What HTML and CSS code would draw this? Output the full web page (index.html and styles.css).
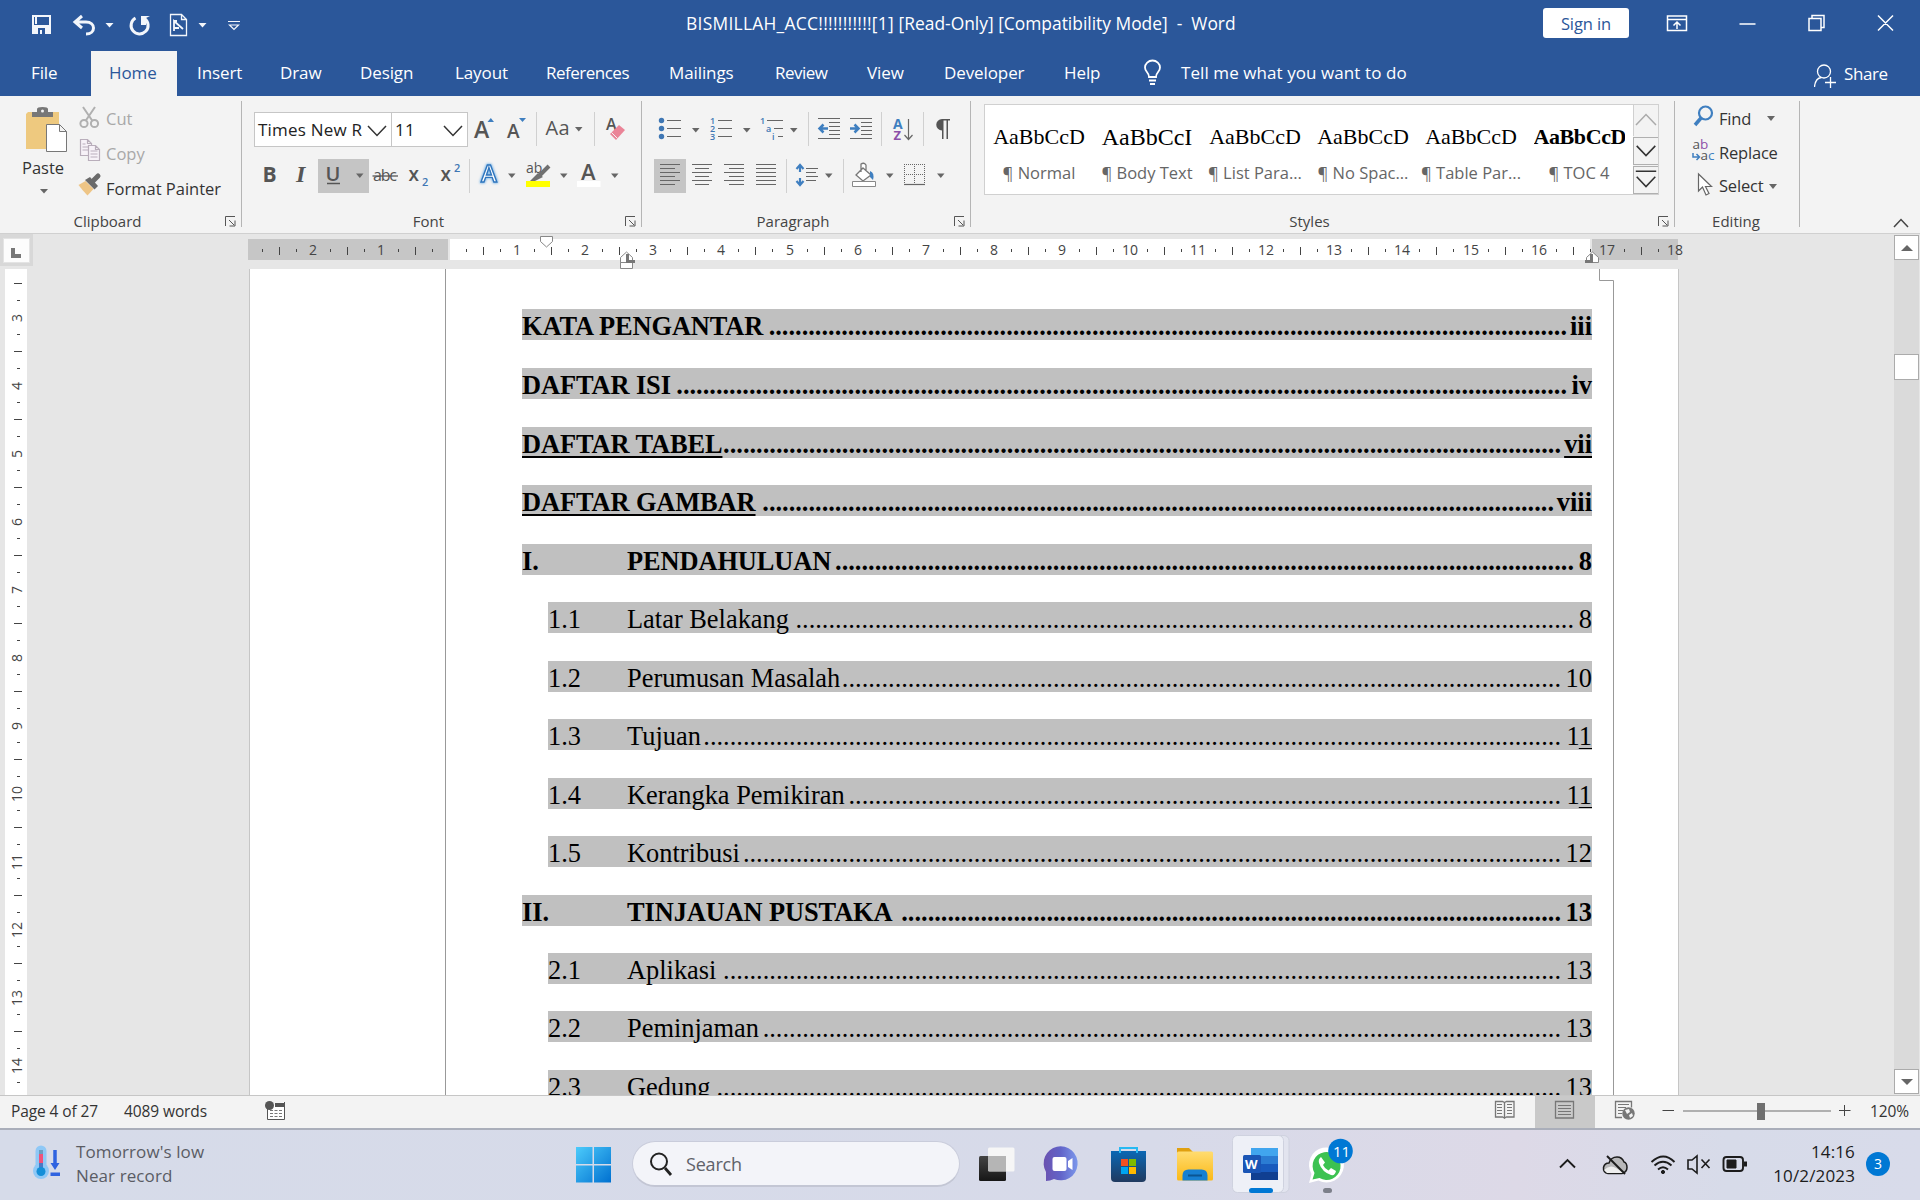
FILE: index.html
```html
<!DOCTYPE html>
<html lang="en">
<head>
<meta charset="utf-8">
<title>BISMILLAH_ACC - Word</title>
<link rel="stylesheet" href="styles.css">
</head>
<body>
<div class="app">

<header class="titlebar">
  <svg class="quick" viewBox="0 0 560 51" fill="none" stroke="#f3f6fb">
    <path d="M33 16h17v17h-17z M36 16v8M47 16" stroke-width="2"/><path d="M34 25h15v8h-15z" fill="#f3f6fb" stroke="none"/><path d="M38 28h7v6h-7z" fill="#2b579a" stroke="none"/><path d="M40 30h2v4h-2z" fill="#f3f6fb" stroke="none"/>
    <path d="M76 22h10c10 0 10 12 0 12M82 16l-7 6 7 6" stroke-width="3"/>
    <path d="M105.500 23h8l-4 4.500z M198.500 23h8l-4 4.500z" fill="#f3f6fb" stroke="none"/>
    <path d="M135.500 18a8.500 8.500 0 1 0 9 .5" stroke-width="3"/><path d="M141 16h9l-4 2v7h-5z" fill="#f3f6fb" stroke="none"/>
    <path d="M170.500 14.500h11l5 5v16h-16z M181.500 14.500v5h5" stroke-width="1.300"/><path d="M174 31v-10l9 8M174 28h5M174 21l3 0" stroke-width="1.800"/>
    <path d="M228 21.500h12M229.500 25l4.500 4.500 4.500-4.500z" stroke-width="1.200"/>
  </svg>
  <div class="doc-title"><span class="name">BISMILLAH_ACC!!!!!!!!!!![1]</span> [Read-Only] [Compatibility Mode]&nbsp; -&nbsp; Word</div>
  <button class="signin">Sign in</button>
  <svg class="winctl" viewBox="1640 0 280 51" fill="none" stroke="#fff" stroke-width="1.500">
    <path d="M1667.500 16h19v14.500h-19z M1667 19.500h20M1677 29v-7M1673.500 25.500l3.500-3.500 3.500 3.500"/>
    <path d="M1739.500 24h16M1809 18.500h12v12h-12z M1812 18.500v-3h12v12h-3M1878 15.500l15 15M1893 15.500l-15 15"/>
  </svg>
</header>

<nav class="tabs">
  <span>File</span><span class="active">Home</span><span>Insert</span><span>Draw</span><span>Design</span><span>Layout</span><span class="tight">References</span><span>Mailings</span><span class="tight">Review</span><span>View</span><span>Developer</span><span>Help</span>
  <svg class="bulb" viewBox="1144 51 37 45" fill="none" stroke="#fff" stroke-width="1.800"><path d="M1149 77c0-5-4-5-4-9.500a7.500 7 0 0 1 15 0c0 4.500-4 4.500-4 9.500z M1149 80.500h7M1150 84h5"/></svg>
  <span class="tell">Tell me what you want to do</span>
  <svg class="share-icon" viewBox="1814 51 30 45" fill="none" stroke="#fff" stroke-width="1.300"><circle cx="1824" cy="71.500" r="6.500"/><path d="M1814.500 87c.5-6 3-9 7-9.500M1825 82.500h11M1830.500 77v11"/></svg>
  <span class="share">Share</span>
</nav>

<section class="ribbon">
  <div class="group clipboard">
    <div class="clip-body">
      <div class="paste">
        <svg viewBox="22 101 56 56"><path d="M28 112h31a2 2 0 0 1 0 0v37H26v-35z" fill="#eec97f"/><path d="M32 117v-5h5v-3q0-2 5.500-2t5.500 2v3h5v5z" fill="#777"/><circle cx="42.500" cy="111" r="1.500" fill="#f3f3f3"/><path d="M46.500 124.500h13l7 7v20h-20z M59.500 124.500v7h7" fill="#fff" stroke="#777"/></svg>
        <span>Paste</span>
        <svg class="paste-caret" viewBox="0 0 8 5"><path d="M0 0h8l-4 4.500z" fill="#666"/></svg>
      </div>
      <div class="clip-list">
        <div class="off"><svg viewBox="78 101 24 32" fill="none" stroke="#b0b0b0" stroke-width="2"><path d="M83 107l9.500 14M95 107l-9.500 14"/><circle cx="84" cy="123.500" r="3.600"/><circle cx="94.500" cy="123.500" r="3.600"/></svg><span>Cut</span></div>
        <div class="off"><svg viewBox="78 138 24 32" fill="#f7f2f8" stroke="#b9aebb" stroke-width="1.200"><path d="M80.500 141.500h7l4 4v12h-11z M87.500 141.500v4h4M82.500 146h3M82.500 149h6M82.500 152h6"/><path d="M88.500 147.500h7l4 4v11h-11z M95.500 147.500v4h4M90.500 153h7M90.500 156h7M90.500 159h7"/></svg><span>Copy</span></div>
        <div><svg viewBox="78 173 24 32"><path d="M78.500 187l7-4 8 8-6 6.500q-5-5-9-10.500z" fill="#eec586"/><path d="M85 182l5-3 8 9-3.500 3.500z" fill="#6a6a6a"/><path d="M92 184l6-6" stroke="#6a6a6a" stroke-width="5" stroke-linecap="round"/></svg><span>Format Painter</span></div>
      </div>
    </div>
    <div class="glabel"><span>Clipboard</span><svg class="launch" viewBox="0 0 11 11"><path d="M.5 10V.5H10M4 4l5 5M10 4.500V10H4.500" fill="none" stroke="#555"/></svg></div>
  </div>

  <div class="group font">
    <div class="frow1">
      <div class="combo"><span>Times New R</span><svg viewBox="0 0 20 12"><path d="M1 1l9 9.500L19 1" fill="none" stroke="#333" stroke-width="1.500"/></svg></div>
      <div class="combo size"><span>11</span><svg viewBox="0 0 20 12"><path d="M1 1l9 9.500L19 1" fill="none" stroke="#333" stroke-width="1.500"/></svg></div>
      <svg viewBox="468 112 33 34"><text class="ic b6" x="474" y="138" font-size="23">A</text><path d="M487.500 122h6.500l-3.200-4z" fill="#3f7fc0"/></svg>
      <svg viewBox="501 112 35 34"><text class="ic b6" x="507" y="138" font-size="19">A</text><path d="M519 118h7l-3.500 4z" fill="#3f7fc0"/></svg>
      <svg class="sepl" viewBox="537 112 57 34"><text class="ic" x="545.500" y="135" font-size="20" textLength="24">Aa</text><path class="car" d="M575 127h7.500l-3.700 4.500z"/></svg>
      <svg class="sepl" viewBox="595 112 46 34"><text class="ic b6" x="606" y="130" font-size="16">A</text><path d="M610 134l9-9 6 5-9 10z" fill="#ea8497"/><path d="M611.500 132.500l6 6" stroke="#f3f3f3"/></svg>
    </div>
    <div class="frow2">
      <svg viewBox="254 159 32 34"><text class="ic b7" x="262.500" y="182" font-size="21">B</text></svg>
      <svg viewBox="286 159 32 34"><text class="ic it" x="296" y="182" font-size="24">I</text></svg>
      <svg class="on" viewBox="318 159 51 34"><text class="ic b6" x="325.500" y="181" font-size="20">U</text><path d="M327 183.500h13" stroke="#555" stroke-width="1.500"/><path class="car" d="M356 173.500h7.500l-3.700 4.500z"/></svg>
      <svg viewBox="369 159 32 34"><text class="ic" x="373" y="181" font-size="16" textLength="24">abc</text><path d="M372.500 176h25.500" stroke="#555" stroke-width="1.300"/></svg>
      <svg viewBox="401 159 32 34"><text class="ic b6" x="408.500" y="181" font-size="19">x</text><text class="bl" x="422" y="186" font-size="11">2</text></svg>
      <svg viewBox="433 159 36 34"><text class="ic b6" x="440.500" y="181" font-size="19">x</text><text class="bl" x="454" y="172" font-size="11">2</text></svg>
      <svg class="sepl" viewBox="470 159 51 34"><text class="fx" x="481" y="182" font-size="24">A</text><path class="car" d="M508 173.500h7.500l-3.700 4.500z"/></svg>
      <svg viewBox="521 159 52 34"><text class="ic" x="526" y="173" font-size="14">ab</text><path d="M549 166l-10 10" stroke="#707070" stroke-width="4"/><path d="M538 173l5 4-8 4h-5z" fill="#707070"/><path d="M526 181h24v6h-24z" fill="#ff0"/><path class="car" d="M560 173.500h7.500l-3.700 4.500z"/></svg>
      <svg viewBox="573 159 52 34"><text class="ic b6" x="581" y="180" font-size="22">A</text><path d="M577 181h23.500v6H577z" fill="#fff"/><path class="car" d="M611 173.500h7.500l-3.700 4.500z"/></svg>
    </div>
    <div class="glabel"><span>Font</span><svg class="launch" viewBox="0 0 11 11"><path d="M.5 10V.5H10M4 4l5 5M10 4.500V10H4.500" fill="none" stroke="#555"/></svg></div>
  </div>

  <div class="group para">
    <div class="prow1">
      <svg viewBox="654 112 50 34"><g fill="#3f77b4"><circle cx="661.500" cy="120.500" r="2.700"/><circle cx="661.500" cy="128.500" r="2.700"/><circle cx="661.500" cy="136.500" r="2.700"/></g><path class="ln" d="M667 120.500h14M667 128.500h14M667 136.500h14"/><path class="car" d="M692 128h7.500l-3.700 4.500z"/></svg>
      <svg viewBox="704 112 52 34"><text class="bl" x="710" y="124" font-size="9">1</text><text class="bl" x="710" y="132" font-size="9">2</text><text class="bl" x="710" y="140" font-size="9">3</text><path class="ln" d="M718 120.500h14M718 128.500h14M718 136.500h14"/><path class="car" d="M743 128h7.500l-3.700 4.500z"/></svg>
      <svg viewBox="756 112 52 34"><text class="bl" x="760" y="124" font-size="9">1</text><text class="bl" x="766" y="132" font-size="9">a</text><text class="bl" x="772" y="140" font-size="9">i</text><path class="ln" d="M767 120.500h16M774 128.500h9M778 136.500h5"/><path class="car" d="M790 128h7.500l-3.700 4.500z"/></svg>
      <svg class="sepl" viewBox="809 112 36 34"><path class="ln" d="M818 118.500h22M829 122.500h11M829 126.500h11M829 130.500h11M829 134.500h11M818 138.500h22"/><path d="M820 128.500h8M823.500 124.500l-4 4 4 4" stroke="#3f7fc0" stroke-width="2.500" fill="none"/></svg>
      <svg viewBox="845 112 36 34"><path class="ln" d="M850 118.500h22M861 122.500h11M861 126.500h11M861 130.500h11M861 134.500h11M850 138.500h22"/><path d="M850 128.500h8M854.500 124.500l4 4-4 4" stroke="#3f7fc0" stroke-width="2.500" fill="none"/></svg>
      <svg class="sepl" viewBox="882 112 41 34"><text x="893" y="129" font-size="14" font-weight="700" fill="#3f7fc0">A</text><text x="893.500" y="140" font-size="13" font-weight="700" fill="#8c4fa8">Z</text><path class="ln" d="M908.500 119v20M904.500 135l4 4.500 4-4.500"/></svg>
      <svg class="sepl" viewBox="924 112 40 34"><path d="M942 119h8v1.500h-2V139h-1.500v-18.500h-3V139H942v-8.500a5.700 5.700 0 0 1 0-11.500z" fill="#555"/></svg>
    </div>
    <div class="prow2">
      <svg class="on" viewBox="654 159 32 34"><path class="ln" d="M660 164.500h20M660 168.500h15M660 172.500h20M660 176.500h15M660 180.500h20M660 184.500h15"/></svg>
      <svg viewBox="686 159 32 34"><path class="ln" d="M692 164.500h20M695 168.500h14M692 172.500h20M695 176.500h14M692 180.500h20M695 184.500h14"/></svg>
      <svg viewBox="718 159 32 34"><path class="ln" d="M724 164.500h20M729 168.500h15M724 172.500h20M729 176.500h15M724 180.500h20M729 184.500h15"/></svg>
      <svg viewBox="750 159 36 34"><path class="ln" d="M756 164.500h20M756 168.500h20M756 172.500h20M756 176.500h20M756 180.500h20M756 184.500h20"/></svg>
      <svg class="sepl" viewBox="787 159 56 34"><path d="M800 166v6M800 178v6M796.500 169l3.500-4 3.500 4M796.500 181l3.500 4 3.500-4" stroke="#3f7fc0" stroke-width="2.200" fill="none"/><path class="ln" d="M806 168.500h12M806 172.500h10M806 176.500h12M806 180.500h10"/><path class="car" d="M825 173.500h7.500l-3.700 4.500z"/></svg>
      <svg class="sepl" viewBox="844 159 56 34"><path d="M863 168l8 7-8 6-7-6z M861 172v-8q3-2 5 1v5" fill="#fff" stroke="#777" stroke-width="1.300"/><path d="M870 171q5 2 3 9l-3-3z" fill="#3f7fc0"/><path d="M852.500 181.500h23v5h-23z" fill="#fff" stroke="#888"/><path class="car" d="M886 173.500h7.500l-3.700 4.500z"/></svg>
      <svg viewBox="900 159 52 34"><path d="M904.500 164v20M914.500 164v20M924.500 164v20M904 164.500h21M904 174.500h21" stroke="#666" stroke-dasharray="1 1" fill="none"/><path class="ln" d="M904 184.500h21"/><path class="car" d="M937 173.500h7.500l-3.700 4.500z"/></svg>
    </div>
    <div class="glabel"><span>Paragraph</span><svg class="launch" viewBox="0 0 11 11"><path d="M.5 10V.5H10M4 4l5 5M10 4.500V10H4.500" fill="none" stroke="#555"/></svg></div>
  </div>

  <div class="group styles">
    <div class="gallery">
      <div class="style"><b>AaBbCcD</b><span>¶ Normal</span></div>
      <div class="style"><b class="big">AaBbCcI</b><span>¶ Body Text</span></div>
      <div class="style"><b>AaBbCcD</b><span>¶ List Para...</span></div>
      <div class="style"><b>AaBbCcD</b><span>¶ No Spac...</span></div>
      <div class="style"><b>AaBbCcD</b><span>¶ Table Par...</span></div>
      <div class="style"><b class="bold">AaBbCcD</b><span>¶ TOC 4</span></div>
      <div class="gscroll">
        <svg viewBox="0 0 24 31"><path d="M2 20l10-10.500L22 20" fill="none" stroke="#aaa" stroke-width="1.500"/></svg>
        <svg class="box" viewBox="0 0 24 28"><path d="M2 8.500l10 10.500L22 8.500" fill="none" stroke="#333" stroke-width="1.700"/></svg>
        <svg class="box" viewBox="0 0 24 28"><path d="M1 4.500h22M2 10.500l10 10.500L22 10.500" fill="none" stroke="#333" stroke-width="1.700"/></svg>
      </div>
    </div>
    <div class="glabel"><span>Styles</span><svg class="launch" viewBox="0 0 11 11"><path d="M.5 10V.5H10M4 4l5 5M10 4.500V10H4.500" fill="none" stroke="#555"/></svg></div>
  </div>

  <div class="group editing">
    <div class="edit-list">
      <div><svg viewBox="1690 101 28 34" fill="none" stroke="#3f7fc0"><circle cx="1704.500" cy="113" r="6.500" stroke-width="2.200"/><path d="M1700 118l-6 7" stroke-width="3.500"/></svg><span>Find</span><i class="caret wide"></i></div>
      <div><svg viewBox="1690 135 28 34"><text x="1691.500" y="149" font-size="13.500" fill="#555">a<tspan fill="#8c4fa8">b</tspan></text><text x="1699.500" y="160" font-size="13.500" fill="#555">a<tspan fill="#3f7fc0">c</tspan></text><path d="M1692 153v4h6M1695.500 154l3 3-3 3" fill="none" stroke="#3f7fc0" stroke-width="1.500"/></svg><span>Replace</span></div>
      <div><svg viewBox="1690 169 28 34"><path d="M1697.500 174v17l4-4 3.500 8 3-1.500-3.500-7h6z" fill="#fff" stroke="#666" stroke-width="1.200"/></svg><span>Select</span><i class="caret"></i></div>
    </div>
    <div class="glabel"><span>Editing</span></div>
  </div>
  <svg class="collapse" viewBox="0 0 16 10"><path d="M1 9l7-7.500L15 9" fill="none" stroke="#444" stroke-width="1.500"/></svg>
</section>

<main class="workspace">
  <div class="side">
    <div class="tabsel"><div><svg viewBox="0 0 10 10"><path d="M0 0h4v6h6v4H0z" fill="#777"/></svg></div></div>
    <svg class="vruler" id="vruler" viewBox="5 269 22 826"></svg>
  </div>
  <div class="center">
    <svg class="hruler" id="hruler" viewBox="40 234 1800 35"></svg>
    <div class="page">
      <svg class="bounds" viewBox="249 269 1430 826" fill="none" stroke="#999"><path d="M445.500 269v826M1599.500 269v11.500h14V1095"/></svg>
      <div class="toc" id="toc">
        <p class="h"><span class="t">KATA PENGANTAR</span><span class="dots"></span><span class="n">iii</span></p>
        <p class="h"><span class="t">DAFTAR ISI</span><span class="dots"></span><span class="n">iv</span></p>
        <p class="h"><span class="t u">DAFTAR TABEL</span><span class="dots"></span><span class="n w2"><u>vii</u></span></p>
        <p class="h"><span class="t u">DAFTAR GAMBAR</span><span class="dots"></span><span class="n w3">viii</span></p>
        <p class="h"><span class="k">I.</span><span class="t">PENDAHULUAN</span><span class="dots"></span><span class="n w1">8</span></p>
        <p class="s"><span class="k">1.1</span><span class="t">Latar Belakang</span><span class="dots"></span><span class="n w1">8</span></p>
        <p class="s"><span class="k">1.2</span><span class="t">Perumusan Masalah</span><span class="dots"></span><span class="n w2">10</span></p>
        <p class="s"><span class="k">1.3</span><span class="t">Tujuan</span><span class="dots"></span><span class="n w2">1<u>1</u></span></p>
        <p class="s"><span class="k">1.4</span><span class="t">Kerangka Pemikiran</span><span class="dots"></span><span class="n w2">1<u>1</u></span></p>
        <p class="s"><span class="k">1.5</span><span class="t">Kontribusi</span><span class="dots"></span><span class="n w2">12</span></p>
        <p class="h"><span class="k">II.</span><span class="t">TINJAUAN PUSTAKA</span><span class="dots"></span><span class="n w2">13</span></p>
        <p class="s"><span class="k">2.1</span><span class="t">Aplikasi</span><span class="dots"></span><span class="n w2">13</span></p>
        <p class="s"><span class="k">2.2</span><span class="t">Peminjaman</span><span class="dots"></span><span class="n w2">13</span></p>
        <p class="s"><span class="k">2.3</span><span class="t">Gedung</span><span class="dots"></span><span class="n w2">13</span></p>
      </div>
    </div>
  </div>
  <div class="vscroll">
    <div class="sb"><svg viewBox="0 0 12 6"><path d="M0 6l6-6 6 6z" fill="#666"/></svg></div>
    <div class="thumb"></div>
    <div class="sb end"><svg viewBox="0 0 12 6"><path d="M0 0l6 6 6-6z" fill="#666"/></svg></div>
  </div>
</main>

<footer class="status">
  <span class="pg">Page 4 of 27</span><span class="wd">4089 words</span>
  <svg class="macro" viewBox="265 1096 21 32"><path d="M267.500 1107v12.500h17V1102" fill="#fff" stroke="#555"/><path d="M275 1103h10v4h-10z" fill="#555"/><path d="M270 1110.500h13M270 1113.500h13M270 1116.500h13" stroke="#777" stroke-dasharray="3 1.500"/><circle cx="269.500" cy="1105.500" r="4.500" fill="#555"/></svg>
  <svg class="read" viewBox="1475 1096 60 32" fill="none" stroke="#777"><path d="M1495.500 1101.500h7l2 1 2-1h7.500v15.500h-7.500l-2 1-2-1h-7z M1504.500 1102v17" stroke-width="1.300"/><path d="M1497 1104.500h5M1497 1107.500h5M1497 1110.500h5M1497 1113.500h5M1507 1104.500h5M1507 1107.500h5M1507 1110.500h5M1507 1113.500h5"/></svg>
  <svg class="print" viewBox="1535 1096 60 32" fill="none" stroke="#777"><path d="M1555.500 1101.500h18v16.500h-18z" stroke-width="1.300"/><path d="M1558 1105.500h13M1558 1108.500h13M1558 1111.500h13M1558 1114.500h13"/></svg>
  <svg class="zoom" viewBox="1595 1096 275 32" fill="none" stroke="#777"><path d="M1622 1117.500h-6.500v-16h16v6" stroke-width="1.300"/><path d="M1618 1104.500h11M1618 1107.500h8M1618 1110.500h5M1618 1113.500h4"/><circle cx="1628.500" cy="1113.500" r="6.200" fill="#777" stroke="none"/><path d="M1625 1110l4-1 1 3-3 2zM1629 1115l3-2 1 3-3 2z" fill="#f3f3f3" stroke="none"/><path d="M1662.500 1110.500h11.500M1839 1110.500h11.500M1844.500 1105v11" stroke="#444"/><path d="M1683 1111h148" stroke="#b0b0b0" stroke-width="2"/><path d="M1757 1103h8v17h-8z" fill="#6f6f6f" stroke="none"/></svg>
  <span class="pct">120%</span>
</footer>

<footer class="taskbar">
  <svg class="weather" viewBox="30 1130 46 70"><path d="M41 1151v20" stroke="#8fc8f6" stroke-width="11" stroke-linecap="round"/><circle cx="41" cy="1171" r="8" fill="#8fc8f6"/><path d="M41 1150v4" stroke="#6c9dbf" stroke-width="4"/><path d="M41 1154v10" stroke="#f0527a" stroke-width="4"/><path d="M41 1163v8" stroke="#4a7ac4" stroke-width="4"/><circle cx="41" cy="1171.500" r="4.500" fill="#148fd8"/><path d="M55 1150v14" stroke="#2f63e0" stroke-width="3.500"/><path d="M50.500 1163h9l-4.500 7z M50.500 1172.500h9.500v3.500h-9.500z" fill="#2f63e0"/></svg>
  <div class="wtext"><span>Tomorrow's low</span><span>Near record</span></div>
  <svg class="start" viewBox="576 1130 56 70"><defs><linearGradient id="w" x1="0" y1="0" x2="1" y2="1"><stop offset="0" stop-color="#4ccbfb"/><stop offset="1" stop-color="#0070d0"/></linearGradient></defs><path d="M576 1147h16.500v17H576z M594 1147h17v17h-17z M576 1165.500h16.500v17H576z M594 1165.500h17v17h-17z" fill="url(#w)"/></svg>
  <div class="search"><svg viewBox="0 0 24 24" fill="none" stroke="#222" stroke-width="2"><circle cx="10" cy="9.500" r="8"/><path d="M16 16l6 7" stroke-width="2.800"/></svg><span>Search</span></div>
  <svg class="apps" viewBox="960 1130 600 70">
    <defs>
      <linearGradient id="dk" x1="0" y1="0" x2="0" y2="1"><stop offset="0" stop-color="#444"/><stop offset="1" stop-color="#161616"/></linearGradient>
      <linearGradient id="ch" x1="0" y1="0" x2="1" y2="0"><stop offset="0" stop-color="#6b52b0"/><stop offset=".5" stop-color="#6264c8"/><stop offset="1" stop-color="#7c98ec"/></linearGradient>
      <linearGradient id="st" x1="0" y1="0" x2="0" y2="1"><stop offset="0" stop-color="#0b68b4"/><stop offset="1" stop-color="#203a60"/></linearGradient>
      <linearGradient id="fo" x1="0" y1="0" x2="0" y2="1"><stop offset="0" stop-color="#ffdc70"/><stop offset="1" stop-color="#fbb917"/></linearGradient>
    </defs>
    <rect x="979" y="1156" width="27" height="25" rx="1.500" fill="url(#dk)"/><rect x="988" y="1147.500" width="26.500" height="24" rx="1.500" fill="#f6f6f6"/><path d="M988 1156h18v15h-18z" fill="#b5b5b5"/>
    <path d="M1046 1181v-9a17 17 0 1 1 8 7q-4 2-8 2z" fill="url(#ch)"/><rect x="1052.500" y="1157" width="14" height="14" rx="2" fill="#fff"/><path d="M1068 1161l4.500-3v12l-4.500-3z" fill="#fff"/>
    <path d="M1111 1151h35v27q0 4-4 4h-27q-4 0-4-4z" fill="url(#st)"/><path d="M1120 1153v-5h17v5" fill="none" stroke="#27b9f2" stroke-width="2"/><path d="M1121 1159h7v7h-7z" fill="#f25022"/><path d="M1129 1159h7v7h-7z" fill="#7fba00"/><path d="M1121 1167h7v7h-7z" fill="#00a4ef"/><path d="M1129 1167h7v7h-7z" fill="#ffb900"/>
    <path d="M1177 1148h12l4 4h16v8h-32z" fill="#e0a010"/><rect x="1177" y="1151.500" width="36" height="29" rx="1.500" fill="url(#fo)"/><path d="M1182.500 1180.500v-5q0-6 6-6h13q6 0 6 6v5z" fill="#1780d2"/><path d="M1188 1175.500h14" stroke="#0b5592" stroke-width="2"/>
    <rect x="1239" y="1135.500" width="50" height="57" rx="5" fill="#e2e4ef" stroke="#cfd2df"/><rect x="1232.500" y="1135.500" width="51" height="57" rx="5" fill="#eef0f7" stroke="#cfd2df"/>
    <path d="M1251 1148h27v8h-27z" fill="#41a5ee"/><path d="M1251 1156h27v8h-27z" fill="#2b7cd3"/><path d="M1251 1164h27v8h-27z" fill="#185abd"/><path d="M1251 1172h27v8h-27z" fill="#103f91"/><rect x="1243" y="1155" width="18" height="18" rx="1.500" fill="#1a55b5"/><text x="1245" y="1169" font-size="13" font-weight="700" fill="#fff">W</text><rect x="1249" y="1188" width="24" height="5" rx="2.500" fill="#0078d4"/>
    <path d="M1309 1183l2.500-9a17.500 17.500 0 1 1 7 6.500z" fill="#fff"/><path d="M1312.500 1179.500l2-6.500a14 14 0 1 1 5 5z" fill="#3cc251"/><path d="M1321 1157q-3 2-2 6 3 9 12 12 4 1 5-4l-5-3-2.500 2.500q-4-2-5.500-5.500l2-2.500z" fill="#fff"/><circle cx="1340.500" cy="1151" r="12.300" fill="#0078d4"/><text x="1333" y="1156.500" font-size="15" fill="#fff">11</text><rect x="1323" y="1188" width="9" height="5" rx="2.500" fill="#7c7f8a"/>
  </svg>
  <svg class="tray" viewBox="1551 1130 204 70" fill="none" stroke="#1c1c1c" stroke-width="1.900">
    <path d="M1560 1167.500l7.500-7.500 7.500 7.500"/>
    <path d="M1608 1173.500q-5-1-4.500-6 1-4.500 5.500-4.500 2-6 8-6 5 0 7 5 3 1 3 5.500t-5 6z" fill="#b8b8ba" stroke-width="1.500"/><path d="M1604 1170q6-6 12-2l8 5h-17z" fill="#eee" stroke="none"/><path d="M1607 1156l18 18"/>
    <path d="M1651.500 1162q12-11 23 0M1654.500 1165.500q8.500-7.500 17 0M1658 1169.500q5-4.500 10 0"/><circle cx="1663" cy="1172" r="1.600" fill="#1c1c1c" stroke-width="1"/>
    <path d="M1688 1160h4l5-4v17l-5-4h-4z M1701.500 1159.500l8 8.500M1709.500 1159.500l-8 8.500" stroke-width="1.600"/>
    <rect x="1723.500" y="1157" width="19.500" height="14" rx="3"/><path d="M1727 1160h9v8h-9z" fill="#1c1c1c" stroke-width="1"/><path d="M1745.500 1161.500v5" stroke-width="3"/>
  </svg>
  <div class="clock"><span>14:16</span><span>10/2/2023</span></div>
  <span class="notif">3</span>
</footer>
</div>
<script src="script.js"></script>
</body>
</html>
```
FILE: styles.css
```css
*{box-sizing:border-box}
body{margin:0;width:1920px;height:1200px;overflow:hidden;font-family:"Open Sans","Noto Sans",sans-serif;font-size:16px;letter-spacing:0;color:#333;font-kerning:normal}
svg{display:block;flex:none}
svg text{letter-spacing:0}
.app{display:flex;flex-direction:column;height:1200px}
span,b{white-space:nowrap}

.titlebar{height:51px;background:#2b579a;display:flex;color:#fff;font-size:16.5px}
.quick{width:560px;height:51px;margin-right:126px}
.doc-title{width:857px;line-height:47px;white-space:nowrap;font-size:17.4px}
.doc-title .name{letter-spacing:.28px}
.signin{width:86px;height:30px;margin-top:8px;border:0;border-radius:3px;background:#fff;color:#2b579a;font:inherit;letter-spacing:-.1px;padding:0}
.winctl{width:280px;height:51px;margin-left:11px}

.tabs{height:45px;background:#2b579a;display:grid;grid-template-columns:91px 86px 103px 80px 95px 91px 123px 106px 92px 77px 120px 80px 37px 633px 30px 76px;color:#fff;font-size:17px;line-height:44px;letter-spacing:-.1px}
.tabs span:first-child{padding-left:31px}
.tabs .active{background:#f3f3f3;color:#2b579a;padding-left:18px}
.tabs .active+span{padding-left:20px}
.tabs .tight{letter-spacing:-.5px}
.tabs .tell{letter-spacing:.08px}
.bulb{width:37px;height:45px}
.share-icon{width:30px;height:45px}
.tabs .share{line-height:46px;letter-spacing:-.4px}

.ribbon{height:138px;background:#f3f3f3;border-bottom:1px solid #d0d0d0;display:flex;padding-top:5px;font-size:16.5px}
.group{height:126px;border-right:1px solid #b5b5b5;display:flex;flex-direction:column}
.glabel{height:22px;margin:auto 0 -5px;display:flex;align-items:center;line-height:22px;font-size:15px;color:#444}
.glabel span{flex:1;text-align:center;padding-right:10px}
.launch{width:11px;height:11px;margin-right:5px}
.clipboard{width:242px}
.clip-body{display:flex;height:104px}
.paste{width:78px;padding-left:22px;line-height:22px}
.paste svg{width:56px;height:56px}
.paste .paste-caret{width:8px;height:5px;margin:10px 0 0 18px}
.clip-list>div{display:flex;height:35px;gap:4px;line-height:36px}
.clip-list svg{width:24px;height:32px}
.clip-list .off{color:#a8a8a8}

.font{width:400px}
.frow1{display:grid;grid-template-columns:138px 76px 33px 35px 58px 47px;height:34px;margin:11px 0 0 12px}
.frow2{display:grid;grid-template-columns:32px 32px 51px 32px 32px 36px 52px 52px 52px;height:34px;margin:13px 0 0 12px}
.frow1>svg,.frow2>svg,.prow1>svg,.prow2>svg{width:100%;height:34px}
.combo{height:35px;border:1px solid #c6c6c6;background:#fff;display:flex;align-items:center;justify-content:space-between;padding:0 4px 0 3px;line-height:30px;color:#222;font-size:17px;letter-spacing:.2px}
.combo.size{border-left:0}
.combo svg{width:20px;height:12px;margin-top:2px}
.sepl{border-left:1px solid #d0d0d0}
.on{background:#c5c5c5}
.ic{fill:#555}
.it{font-family:"Liberation Serif",serif;font-style:italic;font-weight:700}
.fx{fill:#fff;stroke:#2f75bd;stroke-width:1.4;font-weight:600;filter:drop-shadow(0 0 1px #8dbfea) drop-shadow(0 0 1px #8dbfea)}
.b6{font-weight:600}
.b7{font-weight:700}
.bl{fill:#3f77b4;font-weight:600}
.ln{fill:none;stroke:#666;stroke-width:1.2}
.car{fill:#666}

.para{width:329px}
.prow1{display:grid;grid-template-columns:50px 52px 52px 37px 36px 42px 41px;height:34px;margin:11px 0 0 12px}
.prow2{display:grid;grid-template-columns:32px 32px 32px 36px 57px 57px 52px;height:34px;margin:13px 0 0 12px}

.styles{width:704px}
.gallery{display:flex;width:675px;height:91px;margin:3px 0 0 13px;border:1px solid #d0d0d0;background:#fff}
.style{width:108px;display:flex;flex-direction:column;align-items:center;overflow:hidden}
.style b{font:400 22px/28px "Liberation Serif",serif;letter-spacing:0;color:#000;margin-top:18px}
.style b.big{font-size:24px}
.style b.bold{font-weight:700;width:91px;overflow:hidden;letter-spacing:-.4px}
.style span{margin-top:11px;line-height:22px;color:#666}
.gscroll{width:25px;display:flex;flex-direction:column;gap:1px;background:#f3f3f3;margin-left:auto}
.gscroll svg{width:25px;height:31px;border-left:1px solid #d0d0d0}
.gscroll .box{height:28px;border:1px solid #b0b0b0;border-right:0}

.editing{width:125px}
.edit-list>div{display:flex;height:34px;line-height:35px;letter-spacing:-.2px}
.edit-list>div:last-child{line-height:34px}
.edit-list svg{width:28px;height:34px;margin-left:16px}
.caret{border:4px solid transparent;border-top:5px solid #666;border-bottom:0;height:0;margin:15px 0 0 6px}
.caret.wide{margin-left:16px}
.editing .glabel span{padding-right:2px}
.collapse{width:16px;height:10px;margin:117px 0 0 93px}

.workspace{height:861px;background:#e6e6e6;display:flex}
.side{width:40px}
.tabsel{width:33px;height:32px;background:#d8d8d8;padding:4px 3px}
.tabsel div{width:27px;height:25px;background:#fcfcfc;border:1px solid #e4e4e4;padding:9px 7px}
.tabsel svg{width:10px;height:10px}
.vruler{width:22px;height:826px;margin:3px 0 0 5px}
.center{width:1800px}
.hruler{width:1800px;height:35px}
.rn{font-size:14px;fill:#444;text-anchor:middle}
.page{width:1430px;height:826px;margin-left:209px;background:#fff;border:solid #c6c6c6;border-width:0 1px;display:grid;overflow:hidden}
.bounds{grid-area:1/1;width:1430px;height:826px;margin-left:-1px}
.toc{grid-area:1/1;width:1070px;margin:40px 0 0 272px;font:26.4px/34px "Liberation Serif","Times New Roman",serif;letter-spacing:0;color:#000}
.toc p{display:flex;height:31px;margin:0 0 28px;background:#c0c0c0}
.toc p:nth-child(2n+3),.toc p:nth-child(12){margin-bottom:27px}
.toc p:nth-child(13){margin-bottom:28px}
.toc .s{margin-left:26px}
.k{width:105px}
.s .k{width:79px}
.h{font-weight:700}
.h .t{letter-spacing:-.1px}
.u,.toc u{text-decoration:underline;text-decoration-thickness:2px;text-underline-offset:3px}
.toc .s u{text-decoration-thickness:1px}
.dots{margin-left:auto}
.n{width:25px;text-align:right}
.n.w1{width:18px}.n.w2{width:31px}.n.w3{width:38px}
.vscroll{width:25px;margin:1px 0 0 54px;height:859px;background:#dadada;display:flex;flex-direction:column}
.sb,.thumb{width:25px;height:25px;background:#fff;border:1px solid #ababab;display:grid;place-items:center}
.sb svg{width:12px;height:6px}
.thumb{height:26px;margin-top:94px}
.end{margin-top:auto}

.status{height:33px;background:#f3f3f3;border-top:1px solid #c6c6c6;display:flex;line-height:31px;font-size:15.5px;letter-spacing:-.1px;color:#333}
.pg{width:124px;padding-left:11px}
.wd{width:141px}
.macro{width:21px;height:32px}
.read{width:60px;height:32px;margin-left:1189px}
.print{width:60px;height:32px;background:#c9c9c9}
.zoom{width:275px;height:32px}

.taskbar{height:72px;border-top:2px solid #aaaeba;background:linear-gradient(90deg,#d6dbe9 0,#d7dae9 60%,#ddd9e7 79%,#d7dbe9 90%,#d8dbea);display:flex;font-size:17px}
.weather{width:46px;height:70px;margin-left:30px}
.wtext{width:500px;padding-top:10px;line-height:24px;display:flex;flex-direction:column;color:#5a5c64;letter-spacing:.1px}
.start{width:56px;height:70px}
.search{width:328px;height:46px;margin-top:11px;border:1px solid #c9ccdb;border-bottom:2px solid #c3c6d4;border-radius:23px;background:#f3f4f9;display:flex;align-items:center;padding-left:16px;gap:13px;font-size:18px;letter-spacing:-.2px;color:#60626a}
.search svg{width:24px;height:24px}
.apps{width:600px;height:70px}
.tray{width:204px;height:70px;margin-left:-9px}
.clock{width:100px;padding-top:10px;line-height:24px;display:flex;flex-direction:column;align-items:flex-end;color:#1c1c1c;font-size:17px;letter-spacing:.15px}
.notif{width:24px;height:24px;border-radius:12px;background:#0078d4;color:#fff;text-align:center;line-height:24px;font-size:14px;margin:22px 0 0 11px}
```
FILE: script.js
```js
// Centimetre pitch of both rulers, in pixels
const CM = 68.1;

function horizontalRuler() {
  const zero = 449;
  let s = '<rect x="248" y="239" width="200" height="21" fill="#c6c6c6"/>' +
    '<rect x="450" y="239" width="1140" height="21" fill="#fff"/>' +
    '<rect x="1592" y="239" width="86" height="21" fill="#c6c6c6"/>';
  for (let q = -11; q <= 72; q++) {
    if (q === 0) continue;
    const x = Math.round(zero + q * CM / 4);
    if (q % 4 === 0) s += `<text class="rn" x="${x}" y="255">${Math.abs(q / 4)}</text>`;
    else if (q % 2 === 0) s += `<path d="M${x + .5} 247v8" stroke="#444"/>`;
    else s += `<path d="M${x + .5} 249v3" stroke="#444"/>`;
  }
  // indent and tab markers
  s += '<g fill="#fff" stroke="#888"><path d="M540.500 236.500h12v5l-6 5.500-6-5.500z"/>' +
    '<path d="M620.500 262.500v-5l6-5.500 6 5.500v5z M620.500 262.500h12v6h-12z"/>' +
    '<path d="M1586.500 262.500v-5l6-5.500 6 5.500v5z"/></g>' +
    '<path d="M626 254h3v6h6v3h-9z M1593 254h-3v6h-5v3h8z" fill="#777"/>';
  document.getElementById('hruler').innerHTML = s;
}

function verticalRuler() {
  let s = '<rect x="5" y="269" width="22" height="826" fill="#fff"/>';
  for (let q = 10; q <= 57; q++) {
    const y = Math.round(318.4 + (q - 12) * 68 / 4);
    if (q % 4 === 0) s += `<text class="rn" transform="translate(22 ${y}) rotate(-90)">${q / 4}</text>`;
    else if (q % 2 === 0) s += `<path d="M14 ${y - .5}h8" stroke="#444"/>`;
    else s += `<path d="M17 ${y - .5}h3" stroke="#444"/>`;
  }
  document.getElementById('vruler').innerHTML = s;
}

// Dot leader length of each contents line
const leaders = [121, 135, 127, 120, 112, 118, 109, 130, 108, 124, 100, 127, 121, 128];
document.querySelectorAll('#toc .dots').forEach((el, i) => {
  el.textContent = '.'.repeat(leaders[i]);
});

horizontalRuler();
verticalRuler();
```
